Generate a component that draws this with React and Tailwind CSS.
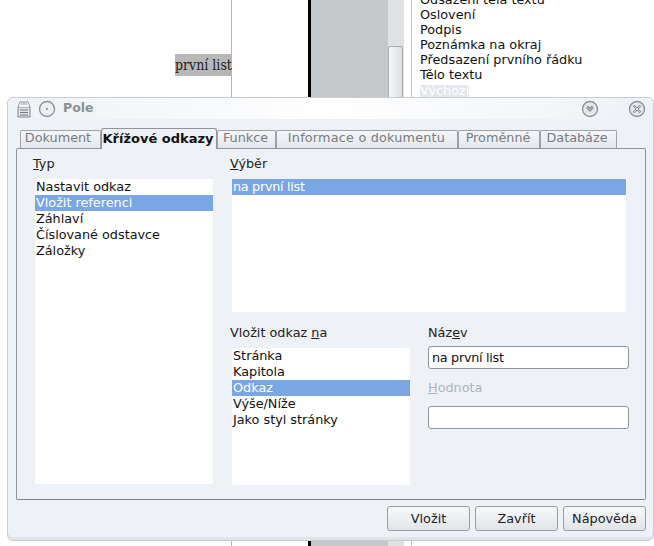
const font = { fontFamily: '"DejaVu Sans", sans-serif' };

function ListBox({ items, selected, className }) {
  return (
    <div className={`bg-white text-[12.8px] leading-4 text-[#111] ${className}`}>
      {items.map((item) => (
        <div key={item} className={`h-4 pl-[1px] ${item === selected ? 'bg-[#7aa7e3] text-white' : ''}`}>
          {item}
        </div>
      ))}
    </div>
  );
}

function Tab({ label, active, className }) {
  if (active) {
    return (
      <div className={`relative z-10 -mb-[1px] h-[21px] rounded-t-[3px] border border-b-0 border-[#8f959c] bg-[#eef1f6] text-center text-[13px] font-bold leading-[19px] text-[#111] whitespace-nowrap ${className}`}>
        {label}
      </div>
    );
  }
  return (
    <div className={`h-[18px] rounded-t-[2px] border border-b-0 border-[#9da3a9] bg-gradient-to-b from-[#f4f6f9] to-[#e4e7ec] text-center text-[12.8px] leading-[14px] text-[#777c82] whitespace-nowrap ${className}`}>
      {label}
    </div>
  );
}

function Button({ label, className }) {
  return (
    <div className={`h-[25px] rounded-[3px] border border-[#9a9fa4] bg-gradient-to-b from-[#f6f7f9] to-[#e2e5e9] text-center text-[12.8px] leading-[23px] text-[#222] ${className}`}>
      {label}
    </div>
  );
}

function Background() {
  return (
    <div className="flex h-full">
      <div className="relative w-[231px] bg-white">
        <div className="absolute right-0 top-[54px] h-[22px] w-[56px] bg-[#b8b8b8] text-center text-[14px] leading-[22px] text-[#222] whitespace-nowrap" style={{ fontFamily: '"DejaVu Serif Condensed", "DejaVu Serif", serif' }}>
          první list
        </div>
      </div>
      <div className="w-px bg-[#b5b5b5]" />
      <div className="w-[76px] bg-white" />
      <div className="w-[3px] bg-black" />
      <div className="w-[77px] bg-[#c4c8cb]" />
      <div className="relative w-[16px] bg-[#dfe1e3]">
        <div className="absolute left-0 top-[46px] h-[60px] w-[15px] rounded-[2px] border border-[#a9adb1] bg-gradient-to-r from-[#f6f7f8] to-[#dcdfe2]" />
      </div>
      <div className="w-[7px] bg-white" />
      <div className="w-px bg-[#c9c9c9]" />
      <div className="-mt-[8px] flex-1 bg-white pl-2 text-[12.8px] leading-[15px] text-[#111]" style={font}>
        {['Odsazení těla textu', 'Oslovení', 'Podpis', 'Poznámka na okraj', 'Předsazení prvního řádku', 'Tělo textu'].map((t) => (
          <div key={t} className="h-[15px] whitespace-nowrap">{t}</div>
        ))}
        <div className="mt-[3px] h-3 w-[49px] bg-[#e4e8ee] text-[12.8px] leading-3 text-white">Výchozí</div>
      </div>
    </div>
  );
}

export default function App() {
  return (
    <div className="relative h-[546px] w-[654px] overflow-hidden bg-white">
      <Background />

      {/* dialog window */}
      <div className="absolute left-[7px] top-[97px] flex h-[444px] w-[647px] flex-col rounded-[6px] border border-[#c9ccd0] bg-[#eef1f6] shadow-[inset_0_-3px_0_#e1e5ea]" style={font}>
        <div className="flex h-[21px] items-center rounded-t-[6px] bg-gradient-to-r from-[#eef1f6] via-white to-[#eef1f6] pl-[8px] pr-[7px]">
          <svg width="16" height="18" viewBox="0 0 16 18" fill="none" className="shrink-0">
            <path d="M2 7h12v10H2z" fill="#dfe4e8" stroke="#7d8a92" />
            <path d="M4 10h8M4 12.5h8M4 15h8" stroke="#6d7a82" />
            <path d="M2 7l2-5h8l2 5" fill="#f2f4f5" stroke="#8d979e" />
            <path d="M5 4h6" stroke="#9aa3a9" />
          </svg>
          <svg width="18" height="18" viewBox="0 0 18 18" fill="none" className="ml-[6px] shrink-0">
            <circle cx="9" cy="9" r="7.5" fill="#eef0f2" stroke="#8e9499" strokeWidth="1.4" />
            <circle cx="9" cy="9" r="1" fill="#7f858a" />
          </svg>
          <span className="ml-[7px] text-[12.5px] font-bold text-[#8b9096]">Pole</span>
          <div className="flex-1" />
          <svg width="18" height="18" viewBox="0 0 18 18" fill="none" className="shrink-0">
            <circle cx="9" cy="9" r="7.5" fill="#e6e9ec" stroke="#8e9499" strokeWidth="1.4" />
            <path d="M5.5 7.5L9 11l3.5-3.5M6.5 6L9 8.5 11.5 6" stroke="#7f858a" strokeWidth="1.1" />
          </svg>
          <svg width="18" height="18" viewBox="0 0 18 18" fill="none" className="ml-[29px] shrink-0">
            <circle cx="9" cy="9" r="7.5" fill="#e6e9ec" stroke="#8e9499" strokeWidth="1.4" />
            <path d="M5.5 5.5l7 7M12.5 5.5l-7 7" stroke="#7f858a" strokeWidth="2.2" />
            <path d="M5.5 5.5l7 7M12.5 5.5l-7 7" stroke="#f1f3f5" strokeWidth="0.8" />
          </svg>
        </div>

        <div className="flex h-[29px] items-end pl-[12px]">
          <Tab label="Dokument" className="w-[81px] pr-[5px]" />
          <Tab label="Křížové odkazy" active className="w-[116px] pr-[2px]" />
          <Tab label="Funkce" className="w-[59px] pr-[2px]" />
          <Tab label="Informace o dokumentu" className="w-[182px] pr-[1px] tracking-[0.2px]" />
          <Tab label="Proměnné" className="w-[82px] pr-[2px]" />
          <Tab label="Databáze" className="w-[77px] pr-[3px]" />
        </div>

        <div className="ml-[8px] flex h-[352px] w-[630px] gap-[19px] rounded-[2px] border border-[#8f959c] border-b-[#7f858b] bg-[#eef1f6] pl-[18px] pt-[7px] text-[12.8px] text-[#222]">
          <div className="flex w-[178px] shrink-0 flex-col">
            <div className="-ml-[2px] h-[16px] leading-4"><span className="underline">T</span>yp</div>
            <ListBox className="mt-[7px] h-[305px]" items={['Nastavit odkaz', 'Vložit referenci', 'Záhlaví', 'Číslované odstavce', 'Záložky']} selected="Vložit referenci" />
          </div>
          <div className="flex w-[394px] shrink-0 flex-col">
            <div className="-ml-[2px] h-[16px] leading-4"><span className="underline">V</span>ýběr</div>
            <ListBox className="mt-[7px] h-[133px] tracking-[-0.3px]" items={['na první list']} selected="na první list" />
            <div className="mt-[13px] flex">
              <div className="flex w-[178px] shrink-0 flex-col">
                <div className="-ml-[2px] h-[16px] leading-4 whitespace-nowrap">Vložit odkaz <span className="underline">n</span>a</div>
                <ListBox className="mt-[7px] h-[137px]" items={['Stránka', 'Kapitola', 'Odkaz', 'Výše/Níže', 'Jako styl stránky']} selected="Odkaz" />
              </div>
              <div className="ml-[18px] flex w-[201px] shrink-0 flex-col">
                <div className="h-[16px] leading-4">Náz<span className="underline">e</span>v</div>
                <div className="mt-[5px] h-[23px] rounded-[3px] border border-[#8f9499] bg-white pl-[3px] leading-[21px] tracking-[-0.3px] text-[#111]">na první list</div>
                <div className="mt-[11px] h-[16px] leading-4 text-[#b0b4b8]"><span className="underline">H</span>odnota</div>
                <div className="mt-[10px] h-[23px] rounded-[3px] border border-[#8f9499] bg-white" />
              </div>
            </div>
          </div>
        </div>

        <div className="mt-[6px] flex justify-end gap-[5px] pr-[7px]">
          <Button label="Vložit" className="w-[83px]" />
          <Button label="Zavřít" className="w-[83px]" />
          <Button label="Nápověda" className="w-[83px]" />
        </div>
      </div>
    </div>
  );
}
